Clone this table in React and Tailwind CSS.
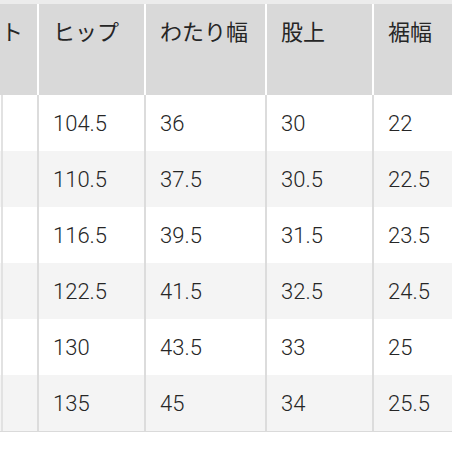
import React from 'react'

const rows = [
  ['104.5', '36', '30', '22'],
  ['110.5', '37.5', '30.5', '22.5'],
  ['116.5', '39.5', '31.5', '23.5'],
  ['122.5', '41.5', '32.5', '24.5'],
  ['130', '43.5', '33', '25'],
  ['135', '45', '34', '25.5'],
]

const widths = ['w-[107px]', 'w-[121px]', 'w-[107px]', 'flex-1']

export default function App() {
  return (
    <div
      className="w-[452px] h-[452px] overflow-hidden bg-white text-[#262626]"
      style={{ fontFamily: 'Roboto, "Noto Sans CJK JP", sans-serif' }}
    >
      <div className="h-[4px] bg-[#ececec]" />
      {/* header */}
      <div className="flex h-[91px] bg-[#d9d9d9] text-[22px]">
        <div className="w-[37px] pt-[13px] pl-[1px] leading-8">ト</div>
        {['ヒップ', 'わたり幅', '股上', '裾幅'].map((h, i) => (
          <div key={h} className={`${widths[i]} border-l-2 border-white pt-[13px] pl-[14px] leading-8`}>
            {h}
          </div>
        ))}
      </div>
      {/* body */}
      <div className="border-b border-[#dadada]">
        {rows.map((r, ri) => (
          <div key={ri} className={`flex h-[56px] text-[22px] font-light ${ri % 2 ? 'bg-[#f4f4f4]' : 'bg-white'}`}>
            <div className="w-[37px] flex">
              <div className="ml-[1px] w-[2px] h-full bg-[#e2e2e2]" />
            </div>
            {r.map((v, i) => (
              <div key={i} className={`${widths[i]} border-l-2 border-[#dcdcdc] pl-[14px] pt-[1px] flex items-center`}>
                {v}
              </div>
            ))}
          </div>
        ))}
      </div>
    </div>
  )
}
